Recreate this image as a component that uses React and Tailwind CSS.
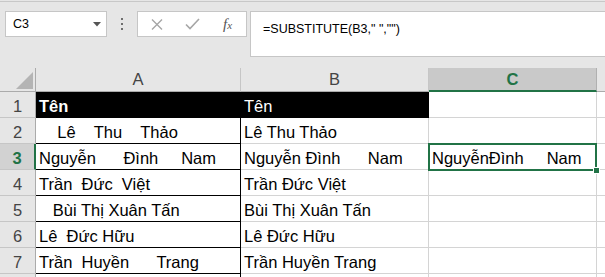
import React from 'react';

const rows = [
  { a: 'Tên', b: 'Tên', c: '', head: true },
  { a: '    Lê    Thu    Thảo', b: 'Lê Thu Thảo', c: '' },
  { a: 'Nguyễn      Đình     Nam', b: 'Nguyễn Đình      Nam', c: 'NguyễnĐình     Nam', selected: true },
  { a: 'Trần  Đức  Việt', b: 'Trần Đức Việt', c: '' },
  { a: '   Bùi Thị Xuân Tấn', b: 'Bùi Thị Xuân Tấn', c: '' },
  { a: 'Lê  Đức Hữu', b: 'Lê Đức Hữu', c: '' },
  { a: 'Trần  Huyền      Trang', b: 'Trần Huyền Trang', c: '' },
  { a: '', b: '', c: '', hideNum: true },
];

const cellText = 'whitespace-pre overflow-hidden pl-[3px] text-[16.5px] leading-[29px]';

const Toolbar = () => (
  <div className="pt-px">
    <div className="h-[67px] border-t border-[#c8c8c8] flex items-start pt-[9px]">
      {/* name box */}
      <div className="ml-[5px] w-[102px] h-[26px] bg-white border border-[#c6c6c6] flex items-center justify-between pl-[7px] pr-[5px]">
        <span className="text-[12.5px] text-black">C3</span>
        <svg width="8" height="5" viewBox="0 0 8 5"><path d="M0 0h8L4 4.5z" fill="#555" /></svg>
      </div>
      {/* grip dots */}
      <div className="w-[30px] h-[26px] flex flex-col items-center justify-center gap-[3px]">
        <span className="w-[2px] h-[2px] bg-[#6e6e6e]" />
        <span className="w-[2px] h-[2px] bg-[#6e6e6e]" />
        <span className="w-[2px] h-[2px] bg-[#6e6e6e]" />
      </div>
      {/* cancel / enter / fx */}
      <div className="w-[110px] h-[26px] bg-white border border-[#c6c6c6] flex items-center">
        <svg className="ml-[13px]" width="12" height="11" viewBox="0 0 12 11">
          <path d="M1 0.5l10 10M11 0.5l-10 10" stroke="#a6a6a6" strokeWidth="1.4" />
        </svg>
        <svg className="ml-[22px]" width="15" height="12" viewBox="0 0 15 12">
          <path d="M1 6.5l4 4L14 1" stroke="#a6a6a6" strokeWidth="1.6" fill="none" />
        </svg>
        <span className="ml-[23px] font-['Liberation_Serif',serif] italic text-[#555] text-[15px] leading-none">
          f<span className="text-[11px]">x</span>
        </span>
      </div>
      {/* formula input */}
      <div className="ml-[3px] flex-1 h-[46px] -mr-px bg-white border border-[#c6c6c6] pl-[12px] pt-[4px]">
        <span className="text-[12.5px] text-black whitespace-pre">=SUBSTITUTE(B3," ","")</span>
      </div>
    </div>
  </div>
);

const Grid = () => (
  <div className="grid grid-cols-[36px_205px_188px_168px_1fr] grid-rows-[24px_repeat(8,26px)] bg-white">
    {/* header row */}
    <div className="bg-[#e6e6e6] border-r border-b border-[#ababab] relative">
      <svg className="absolute left-[16px] top-[4px]" width="17" height="17" viewBox="0 0 17 17">
        <path d="M17 0V17H0z" fill="#b4b4b4" />
      </svg>
    </div>
    <div className="bg-[#e6e6e6] border-r border-[#c6c6c6] border-b border-b-[#ababab] text-center text-[#444] text-[16.5px] leading-[23px]">A</div>
    <div className="bg-[#e6e6e6] border-r border-[#c6c6c6] border-b border-b-[#ababab] text-center text-[#444] text-[16.5px] leading-[23px]">B</div>
    <div className="bg-[#c9c9c9] border-r border-[#b0b0b0] border-b-2 border-b-[#217346] text-center font-bold text-[#217346] text-[16.5px] leading-[23px]">C</div>
    <div className="bg-[#e6e6e6] border-b border-[#ababab]" />

    {rows.map((r, i) => (
      <React.Fragment key={i}>
        <div
          className={
            r.selected
              ? 'bg-[#d2d2d2] border-r-2 border-r-[#217346] border-b border-b-[#c6c6c6] text-center font-bold text-[#217346] text-[16.5px] leading-[29px] overflow-hidden'
              : 'bg-[#e6e6e6] border-r border-r-[#ababab] border-b border-b-[#c6c6c6] text-center text-[#444] text-[16.5px] leading-[29px] overflow-hidden'
          }
        >
          {r.hideNum ? '' : i + 1}
        </div>
        <div className={`${cellText} border-r border-b border-black ${r.head ? 'bg-black text-white font-bold' : 'text-black'}`}>
          {r.a}
        </div>
        <div className={`${cellText} border-r border-b ${r.head ? 'bg-black text-white border-black' : 'text-black border-[#d4d4d4]'}`}>
          {r.b}
        </div>
        <div className={`${cellText} border-r border-b border-[#d4d4d4] text-black ${r.selected ? 'relative overflow-visible' : ''}`}>
          {r.c}
          {r.selected && (
            <div className="absolute -left-px -top-px -right-px -bottom-[2px] border-2 border-[#217346] z-10 pointer-events-none">
              <div className="absolute -right-[5px] -bottom-[5px] w-[7px] h-[7px] bg-[#217346] border border-white" />
            </div>
          )}
        </div>
        <div className="border-b border-[#d4d4d4]" />
      </React.Fragment>
    ))}
  </div>
);

export default function App() {
  return (
    <div className="w-[605px] h-[277px] overflow-hidden bg-[#e6e6e6] font-['Liberation_Sans',Arial,sans-serif]">
      <Toolbar />
      <Grid />
    </div>
  );
}
